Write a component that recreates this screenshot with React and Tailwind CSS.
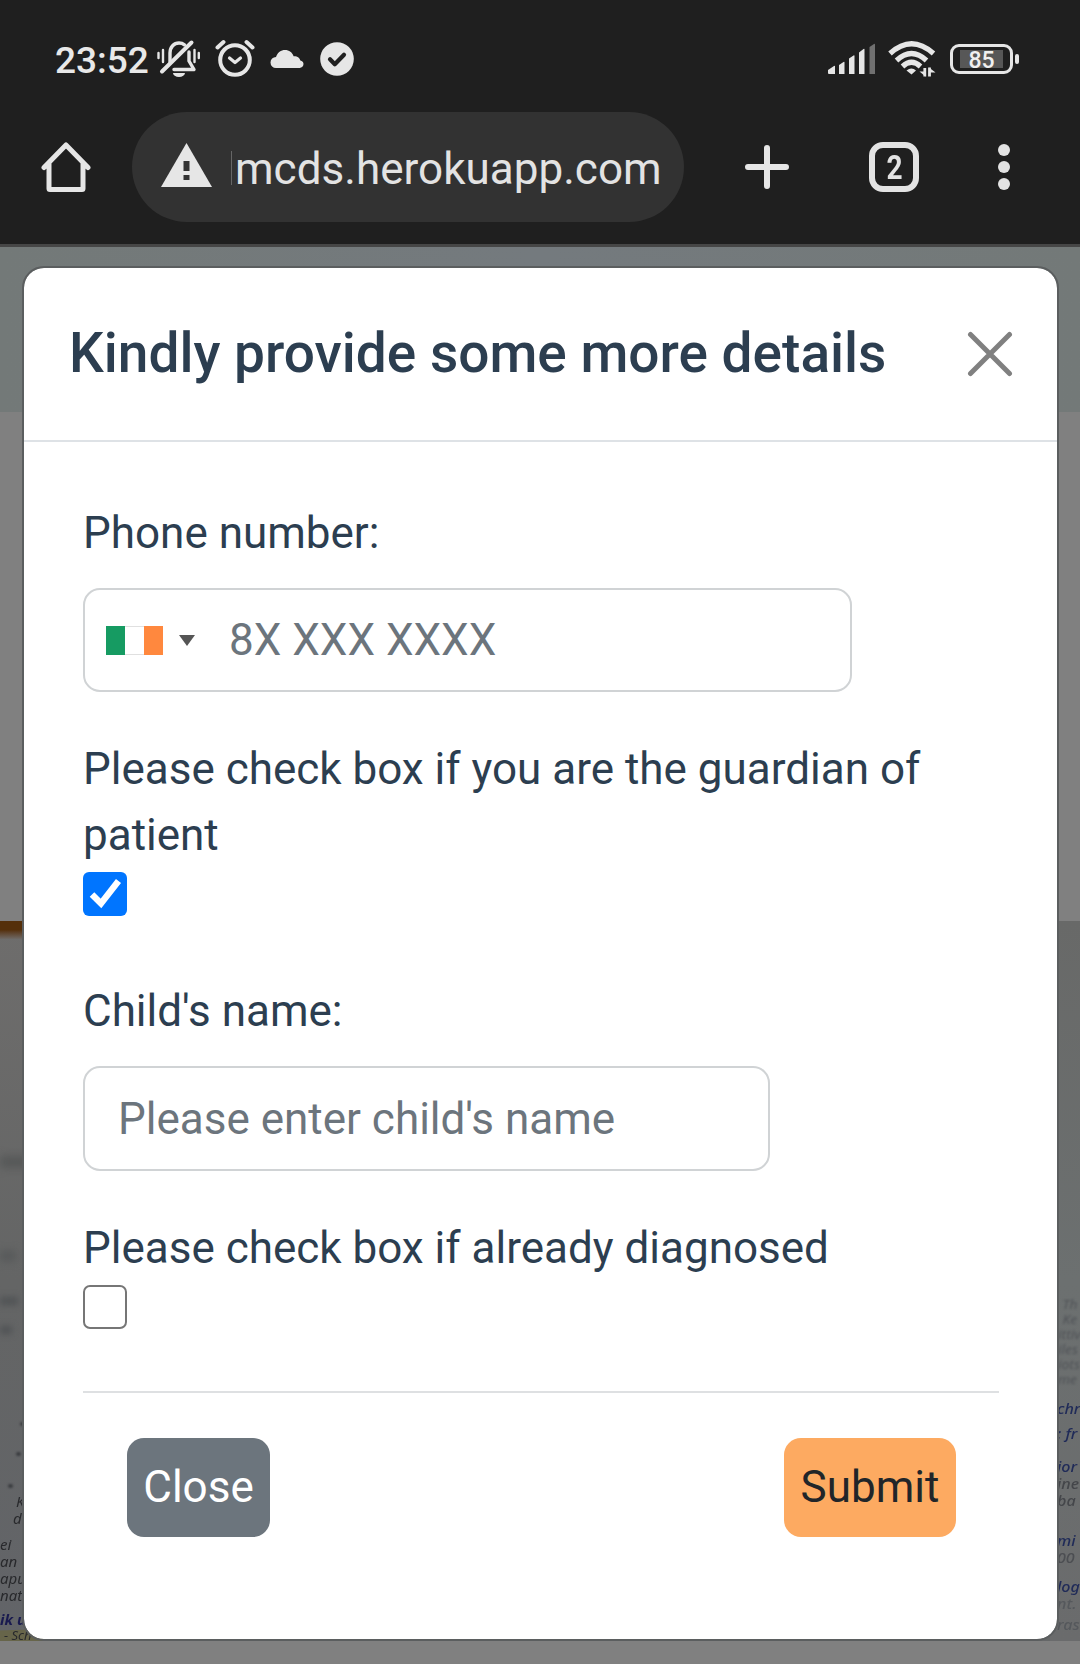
const INK = "#e6e6e6";

function StatusIconsLeft() {
  return (
    <div className="flex items-center">
      <svg width="46" height="40" viewBox="0 0 46 40" fill="none" stroke={INK} strokeWidth="2.8" strokeLinecap="round">
        <path d="M2.500 14v5M7 11v12M38.500 11v12M42.800 14v5" strokeWidth="2.4" />
        <path d="M14 23V14c0-6 4-10 9-10 2 0 4 .6 5.500 1.800M33 13v9l5 8.500H18" strokeLinejoin="round" strokeWidth="3.400" />
        <path d="M35.500 3.500 6 32.500" strokeWidth="4" />
        <path d="M17 34h12a6 4 0 0 1-12 0z" fill={INK} stroke="none" />
      </svg>
      <svg className="ml-[13px]" width="40" height="40" viewBox="0 0 40 40" fill="none" stroke={INK} strokeLinecap="round" strokeLinejoin="round">
        <circle cx="20" cy="21" r="14.800" strokeWidth="4" />
        <path d="M14.500 19l5.500 4.500 5.500-4.500" strokeWidth="3.200" />
        <path d="M2.500 8.500 8.500 3M37.500 8.500 31.500 3" strokeWidth="4" />
      </svg>
      <svg className="ml-[15px]" width="34" height="20" viewBox="0 0 34 20" fill={INK}>
        <path d="M6 19a5.500 5.500 0 0 1 0-11C7.500 3.500 11 1 15 1c4.200 0 7.300 2.500 8.600 6.200C27.500 7 30 9 30.300 11.500c2 .3 3.200 1.800 3.200 3.600 0 2.200-1.600 3.900-3.900 3.900z" />
      </svg>
      <svg className="ml-[16px]" width="34" height="34" viewBox="0 0 34 34" fill="none">
        <circle cx="17" cy="17" r="16.800" fill={INK} />
        <path d="M10 17.200l4.800 5 9.200-9.500" stroke="#202020" strokeWidth="4.200" strokeLinecap="round" strokeLinejoin="round" />
      </svg>
    </div>
  );
}

function StatusIconsRight() {
  return (
    <div className="flex items-center">
      <svg width="50" height="32" viewBox="0 0 50 32" fill={INK}>
        <path d="M1 27l6-4q1-.5 1 .5V31H2q-1 0-1-1zM12 22l4.500-3q1-.5 1 .5V31H12zM22 15.500l4.500-3q1-.5 1 .5V31H22zM32 9.500l4.500-3.500q1-.5 1 .5V31H32z" />
        <path d="M42.500 4l4.500-3q1-.5 1 .5V31h-5.500z" fill="#707070" />
      </svg>
      <svg className="ml-[11px]" width="48" height="36" viewBox="0 0 48 36" fill="none" stroke={INK}>
        <path d="M2 12.500Q23.500-7 45.500 12.500M8.500 19.500Q23.500 5.500 38.500 19.500M14.500 25.500Q23.500 17 32.500 25.500" strokeWidth="5.200" />
        <path d="M18.500 29.500Q23.500 25.500 28 29.500L23.500 33.500z" fill={INK} stroke="none" />
        <path d="M36.800 27v8.500M41.500 35.500v-9" strokeWidth="2.800" />
        <path d="M37.500 35.500 31.500 30.500h6zM41 26.500l6.500 5H41z" fill={INK} stroke="none" />
      </svg>
      <div className="ml-[14px] flex h-[30px] w-[63px] items-center justify-center rounded-[9px] border-[3px] border-[#e6e6e6]">
        <div className="flex h-[18px] w-[43px] items-center justify-center bg-[#575757] pt-[2px] text-[23px] font-medium leading-none text-[#f0f0f0]">
          85
        </div>
      </div>
      <div className="ml-[2px] h-[10px] w-[4px] rounded-[2px] bg-[#e6e6e6]" />
    </div>
  );
}

function BrowserBar() {
  return (
    <header className="h-[247px] border-b-[3px] border-[#464646] bg-[#1f1f1f]">
      <div className="flex h-[112px] items-center justify-between pl-[55px] pr-[61px] pt-[6px]">
        <div className="flex items-center">
          <span className="w-[101px] whitespace-nowrap pt-[2px] text-[37px] font-medium leading-none text-[#e8e8e8]">23:52</span>
          <StatusIconsLeft />
        </div>
        <StatusIconsRight />
      </div>
      <div className="flex h-[110px] items-center">
        <svg className="ml-[41px]" width="50" height="52" viewBox="0 0 50 52" fill="none" stroke={INK} strokeWidth="5" strokeLinecap="round" strokeLinejoin="round">
          <path d="M3 26.500 25 4l22 22.500M8 23v24.500q0 1 1 1h32q1 0 1-1V23" />
        </svg>
        <div className="ml-[41px] flex h-[110px] w-[552px] items-center rounded-[55px] bg-[#323232] pl-[29px]">
          <svg className="mb-[4px]" width="51" height="44" viewBox="0 0 51 44">
            <path d="M25.500 0 51 44H0z" fill={INK} />
            <path d="M22.500 18h6v10h-6zM22.500 32h6v5h-6z" fill="#323232" />
          </svg>
          <div className="ml-[19px] mt-[2px] h-[34px] w-px bg-[#666666]" />
          <span className="ml-[3px] whitespace-nowrap pt-[4px] text-[44px] leading-none tracking-[0.03px] text-[#e3e3e3]">mcds.herokuapp.com</span>
        </div>
        <svg className="ml-[60px]" width="46" height="46" viewBox="0 0 46 46" stroke={INK} strokeWidth="6" strokeLinecap="round">
          <path d="M23 4v38M4 23h38" />
        </svg>
        <div className="ml-[79px] flex h-[50px] w-[50px] items-center justify-center rounded-[14px] border-[6px] border-[#e3e3e3] text-[33px] font-bold leading-none text-[#e3e3e3]">
          <span className="scale-x-85">2</span>
        </div>
        <div className="ml-[79px] flex flex-col gap-[5px]">
          <span className="h-[12px] w-[12px] rounded-full bg-[#e3e3e3]" />
          <span className="h-[12px] w-[12px] rounded-full bg-[#e3e3e3]" />
          <span className="h-[12px] w-[12px] rounded-full bg-[#e3e3e3]" />
        </div>
      </div>
    </header>
  );
}

/* Dimmed page behind the dialog: teal banner, grey gap, blurred newspaper photo. */
function Backdrop() {
  return (
    <div className="absolute inset-0 flex flex-col overflow-hidden bg-[#808080]">
      <div className="h-[165px] shrink-0 bg-linear-to-r from-[#737978] via-[#747a7e] to-[#737978]" />
      <div className="h-[509px] shrink-0" />
      <div className="relative h-[720px] shrink-0 overflow-hidden bg-[#656768]">
        <div className="absolute left-0 top-0 h-full w-[30px] bg-linear-to-b from-[#6e6d6c] via-[#646565] to-[#626468]" />
        <div className="absolute right-0 top-0 h-full w-[30px] bg-linear-to-b from-[#686968] via-[#6c7070] to-[#6a6b6c]" />
        <div className="absolute left-0 top-0 h-[18px] w-[30px] bg-linear-to-b from-[#55300a] from-50% to-[#6e6a66]" />
        <div className="absolute left-0 top-[235px] h-[12px] w-[30px] bg-[#565858] blur-[4px]" />
        <div className="absolute left-0 top-[330px] h-[10px] w-[16px] bg-[#565859] blur-[4px]" />
        <div className="absolute left-0 top-[376px] h-[8px] w-[18px] bg-[#505355] blur-[3px]" />
        <div className="absolute left-0 top-[405px] h-[8px] w-[12px] bg-[#505355] blur-[3px]" />
        <div className="absolute left-[20px] top-[501px] h-[4px] w-[5px] rounded-full bg-[#3a3c40] blur-[1px]" />
        <div className="absolute left-[16px] top-[531px] h-[4px] w-[5px] rounded-full bg-[#3a3c40] blur-[1px]" />
        <div className="absolute left-[8px] top-[563px] h-[4px] w-[5px] rounded-full bg-[#3a3c40] blur-[1px]" />
        <div className="absolute -left-[4px] bottom-0 h-[13px] w-[150px] -rotate-2 bg-[#67654a]" />
        <div className="absolute left-0 top-[572px] flex h-[148px] w-[200px] flex-col text-[15px] italic leading-[17px] text-[#28292c] font-['Noto_Sans'] blur-[0.5px]">
          <span className="ml-[16px]">K</span>
          <span className="ml-[13px]">d</span>
          <span className="mt-[9px]">ei</span>
          <span>an</span>
          <span>apu</span>
          <span>nat</span>
          <span className="mt-[7px] font-bold text-[#191a4f]">ik u</span>
          <span className="ml-[4px] whitespace-nowrap text-[13px] leading-[14px]">- Sch</span>
        </div>
        <div className="absolute left-[1058px] top-[376px] flex w-[60px] origin-left scale-x-115 flex-col text-[12px] italic leading-[15px] text-[#505357] font-['Noto_Sans'] blur-[0.8px]">
          <span className="ml-[4px]">Th</span>
          <span className="ml-[4px]">Ke</span>
          <span>ittiv</span>
          <span>iles</span>
          <span>iots</span>
          <span>me</span>
        </div>
        <div className="absolute left-[1057px] top-[479px] flex w-[60px] origin-left scale-x-115 flex-col text-[14px] font-medium italic leading-[17px] text-[#202b58] font-['Noto_Sans'] blur-[0.6px]">
          <span>chr</span>
          <span className="mt-[8px]">: fr</span>
          <span className="mt-[16px]">ior</span>
          <span className="text-[#44464a]">ine</span>
          <span className="text-[#44464a]">ba</span>
          <span className="mt-[23px]">mi</span>
          <span className="text-[#4c4e52]">00</span>
          <span className="mt-[12px]">log</span>
          <span className="text-[#55585c]">nt.</span>
          <span className="mt-[4px] text-[#55585c]">ras</span>
        </div>
      </div>
    </div>
  );
}

function Flag() {
  return (
    <div className="flex h-[29px] w-[57px]">
      <div className="flex-1 bg-[#169b62]" />
      <div className="flex-1 border-y border-[#e0e0e0] bg-white" />
      <div className="flex-1 bg-[#ff883e]" />
    </div>
  );
}

function Modal() {
  return (
    <section className="relative ml-[22px] mr-[21px] mt-[19px] h-[1375px] rounded-[22px] border-2 border-[#5b5e5f] bg-white bg-clip-padding text-[44px] leading-[66px] text-[#2c3e50]">
      <div className="flex h-[174px] items-center justify-between border-b-2 border-[#dee2e6] pl-[45px] pr-[44px]">
        <h5 className="-mt-[2px] whitespace-nowrap text-[55px] font-medium leading-[82px]">Kindly provide some more details</h5>
        <svg width="46" height="46" viewBox="0 0 46 46" stroke="#808080" strokeWidth="5" strokeLinecap="round">
          <path d="M3.500 3.500l39 39M42.500 3.500l-39 39" />
        </svg>
      </div>
      <div className="pl-[59px] pr-[58px] pt-[58px]">
        <div>Phone number:</div>
        <div className="mt-[22px] flex h-[104px] w-[769px] items-center rounded-[17px] border-2 border-[#d0d3d5] pl-[21px]">
          <Flag />
          <svg className="ml-[16px]" width="16" height="11" viewBox="0 0 16 11">
            <path d="M0 0h16L8 11z" fill="#555555" />
          </svg>
          <span className="ml-[34px] text-[#6c757d]">8X XXX XXXX</span>
        </div>
        <div className="mt-[44px]">Please check box if you are the guardian of patient</div>
        <div className="mt-[4px] flex h-[44px] w-[44px] items-center justify-center rounded-[6px] bg-[#0075ff]">
          <svg width="44" height="44" viewBox="0 0 44 44" fill="none" stroke="#ffffff" strokeWidth="6.400">
            <path d="M9 22.500l9 9L35.500 9" />
          </svg>
        </div>
        <div className="mt-[62px]">Child's name:</div>
        <div className="mt-[22px] flex h-[105px] w-[687px] items-center rounded-[17px] border-2 border-[#d0d3d5] pl-[33px] pt-px text-[#6c757d]">
          Please enter child's name
        </div>
        <div className="mt-[44px]">Please check box if already diagnosed</div>
        <div className="mt-[4px] h-[44px] w-[44px] rounded-[7px] border-[2.500px] border-[#767676] bg-white" />
        <div className="mt-[62px] h-[2px] bg-[#dee0e2]" />
        <div className="mt-[45px] flex justify-between pl-[44px] pr-[43px]">
          <button className="h-[99px] w-[143px] rounded-[17px] bg-[#6c757d] pb-[2px] text-white">Close</button>
          <button className="h-[99px] w-[172px] rounded-[17px] bg-[#fdaa61] pb-[2px] text-[#212529]">Submit</button>
        </div>
      </div>
    </section>
  );
}

export default function App() {
  return (
    <div className="h-[1664px] w-[1080px] overflow-hidden font-['Roboto',sans-serif]">
      <BrowserBar />
      <main className="relative flow-root h-[1417px]">
        <Backdrop />
        <Modal />
      </main>
    </div>
  );
}
